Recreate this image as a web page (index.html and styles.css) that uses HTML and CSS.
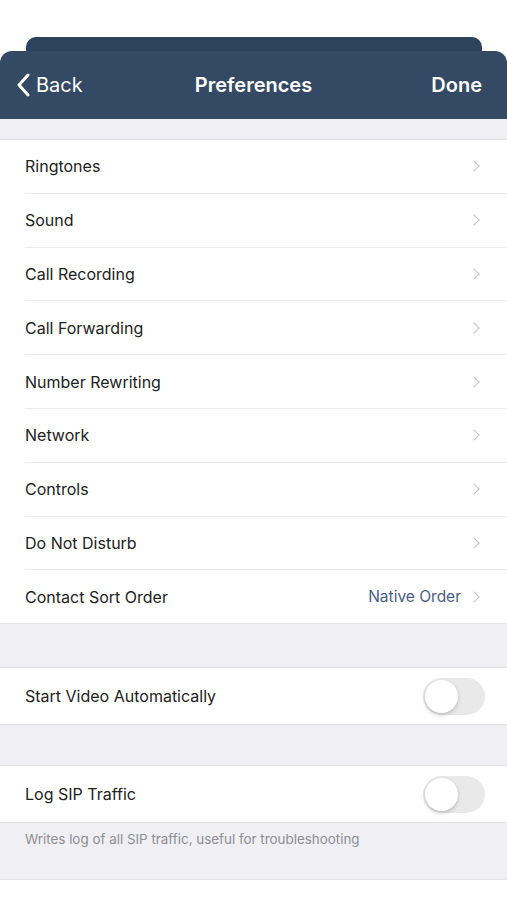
FILE: index.html
```html
<!DOCTYPE html>
<html lang="en">
<head>
    <meta charset="UTF-8">
    <meta name="viewport" content="width=device-width, initial-scale=1.0">
    <title>Preferences</title>
    <link rel="stylesheet" href="styles.css">
</head>
<body>
    <div class="sheet-back"></div>
    <div class="navbar">
        <div class="nav-left">
            <svg class="back-icon" width="14" height="24" viewBox="0 0 14 24">
                <path d="M12 2 L3 12 L12 22" fill="none" stroke="#fff" stroke-width="3" stroke-linecap="round" stroke-linejoin="round"/>
            </svg>
            <span>Back</span>
        </div>
        <div class="nav-title">Preferences</div>
        <div class="nav-right">Done</div>
    </div>

    <div class="spacer small"></div>

    <div class="group">
        <div class="row"><span class="label">Ringtones</span><span class="chev"></span></div>
        <div class="row"><span class="label">Sound</span><span class="chev"></span></div>
        <div class="row"><span class="label">Call Recording</span><span class="chev"></span></div>
        <div class="row"><span class="label">Call Forwarding</span><span class="chev"></span></div>
        <div class="row"><span class="label">Number Rewriting</span><span class="chev"></span></div>
        <div class="row"><span class="label">Network</span><span class="chev"></span></div>
        <div class="row"><span class="label">Controls</span><span class="chev"></span></div>
        <div class="row"><span class="label">Do Not Disturb</span><span class="chev"></span></div>
        <div class="row last"><span class="label">Contact Sort Order</span><span class="value">Native Order</span><span class="chev"></span></div>
    </div>

    <div class="spacer"></div>

    <div class="group">
        <div class="row tall last"><span class="label">Start Video Automatically</span><span class="toggle"></span></div>
    </div>

    <div class="spacer short"></div>

    <div class="group">
        <div class="row tall last"><span class="label">Log SIP Traffic</span><span class="toggle"></span></div>
    </div>

    <div class="footer">Writes log of all SIP traffic, useful for troubleshooting</div>
</body>
</html>
```

FILE: styles.css
```css
body {
    margin: 0;
    font-family: Inter, "Noto Sans", sans-serif;
    background-color: #fff;
    color: #222;
    padding-top: 37px;
}

.sheet-back {
    height: 14px;
    margin: 0 25px 0 26px;
    background-color: #2d425c;
    border-radius: 10px 10px 0 0;
}

.navbar {
    height: 68px;
    background-color: #344a64;
    border-radius: 12px 12px 0 0;
    display: flex;
    align-items: center;
    justify-content: space-between;
    padding: 0 25px 0 16px;
    color: #fff;
    font-size: 20px;
    position: relative;
}

.nav-left {
    display: flex;
    align-items: center;
    gap: 6px;
}

.nav-title {
    position: absolute;
    left: 0;
    right: 0;
    text-align: center;
    font-weight: 600;
    pointer-events: none;
}

.nav-right {
    font-weight: 600;
}

.spacer {
    height: 43px;
    background-color: #efeff4;
    border-bottom: 1px solid #e3e3e8;
}

.spacer.small {
    height: 20px;
}

.spacer.short {
    height: 40px;
}

.group {
    background-color: #fff;
}

.row {
    height: 52.8px;
    display: flex;
    align-items: center;
    margin-left: 25px;
    padding-right: 26px;
    border-bottom: 1px solid #ececf0;
    font-size: 16px;
}

.row.last {
    margin-left: 0;
    padding-left: 25px;
    border-bottom: 1px solid #e3e3e8;
}

.row.tall {
    height: 56px;
    padding-right: 22px;
}

.label {
    flex: 1;
}

.value {
    color: #4b5d86;
    font-size: 15.5px;
    margin-right: 9px;
}

.chev {
    width: 7px;
    height: 7px;
    border-top: 1.5px solid #c4c4c8;
    border-right: 1.5px solid #c4c4c8;
    transform: rotate(45deg);
    margin-right: 3px;
}

.toggle {
    width: 62px;
    height: 37px;
    border-radius: 19px;
    background-color: #e9e9ea;
    position: relative;
}

.toggle::after {
    content: "";
    position: absolute;
    left: 2px;
    top: 2px;
    width: 33px;
    height: 33px;
    border-radius: 50%;
    background-color: #fff;
    box-shadow: 0 2px 4px rgba(0, 0, 0, 0.2);
}

.footer {
    background-color: #efeff4;
    color: #8e8e93;
    font-size: 13.4px;
    padding: 8px 25px 32px;
    border-bottom: 1px solid #e3e3e8;
}
```
